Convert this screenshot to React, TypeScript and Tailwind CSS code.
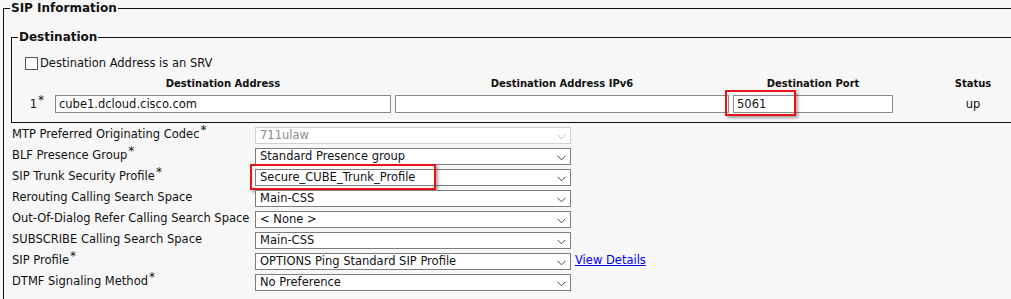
import React from "react";

const font = { fontFamily: '"DejaVu Sans", Verdana, sans-serif' };

const Chevron = ({ light }: { light?: boolean }) => (
  <svg width="9" height="6" viewBox="0 0 9 6" className="mt-[3px] shrink-0">
    <path d="M0.5 0.8 L4.5 4.8 L8.5 0.8" fill="none" stroke={light ? "#b8b8b8" : "#444"} strokeWidth="1" />
  </svg>
);

const Select = ({ value, disabled }: { value: string; disabled?: boolean }) => (
  <div
    className={
      "flex h-[17px] w-[316px] items-center justify-between bg-white pl-[4px] pr-[4px] " +
      (disabled ? "border border-[#cfcfcf] text-[#8a8a8a]" : "border border-[#7d7d7d] text-[#111]")
    }
  >
    <span className="leading-[15px]">{value}</span>
    <Chevron light={disabled} />
  </div>
);

const RedBox = ({ className }: { className: string }) => (
  <div
    className={
      "pointer-events-none absolute border-2 border-[#e8121b] shadow-[2px_2px_3px_rgba(0,0,0,0.35)] " + className
    }
  />
);

const Star = () => <span className="relative top-[-4px] ml-[1px] text-[12px]">*</span>;

type Row = { label: string; req?: boolean; value: string; disabled?: boolean; boxed?: boolean; link?: boolean };

const rows: Row[] = [
  { label: "MTP Preferred Originating Codec", req: true, value: "711ulaw", disabled: true },
  { label: "BLF Presence Group", req: true, value: "Standard Presence group" },
  { label: "SIP Trunk Security Profile", req: true, value: "Secure_CUBE_Trunk_Profile", boxed: true },
  { label: "Rerouting Calling Search Space", value: "Main-CSS" },
  { label: "Out-Of-Dialog Refer Calling Search Space", value: "< None >" },
  { label: "SUBSCRIBE Calling Search Space", value: "Main-CSS" },
  { label: "SIP Profile", req: true, value: "OPTIONS Ping Standard SIP Profile", link: true },
  { label: "DTMF Signaling Method", req: true, value: "No Preference" },
];

export default function App() {
  return (
    <div className="h-[299px] w-[1011px] overflow-hidden bg-[#f7f7f7] pt-[1px] text-[11.5px] text-[#111]" style={font}>
      <fieldset className="ml-[3px] w-[1040px] border border-[#111] pb-[20px] pl-[7px]">
        <legend className="-ml-[1px] px-[1px] text-[12px] font-bold leading-[14px]">SIP Information</legend>

        <fieldset className="mt-[15px] border border-[#111] pb-[9px] pl-[7px]">
          <legend className="-ml-[1px] px-[1px] text-[12px] font-bold leading-[14px]">Destination</legend>

          <div className="ml-[6px] mt-[12px] flex h-[14px] items-center">
            <span className="mr-[2px] h-[13px] w-[13px] border border-[#555] bg-white" />
            <span className="leading-[14px]">Destination Address is an SRV</span>
          </div>

          <div className="mt-[7px] grid grid-cols-[36px_336px_338px_164px_160px] text-[10px] font-bold leading-[14px]">
            <div />
            <div className="text-center">Destination Address</div>
            <div className="pl-[4px] text-center">Destination Address IPv6</div>
            <div className="pl-[4px] text-center">Destination Port</div>
            <div className="text-center">Status</div>
          </div>

          <div className="mt-[4px] grid h-[18px] grid-cols-[36px_336px_338px_164px_160px] items-center">
            <div className="pr-[11px] text-right">
              1<Star />
            </div>
            <div className="flex h-[18px] items-center border border-[#8a8a8a] bg-white pl-[3px]">cube1.dcloud.cisco.com</div>
            <div className="ml-[4px] h-[18px] border border-[#8a8a8a] bg-white" />
            <div className="relative ml-[4px] flex h-[18px] items-center border border-[#8a8a8a] bg-white pl-[3px]">
              5061
              <RedBox className="left-[-9px] top-[-6px] h-[26px] w-[71px]" />
            </div>
            <div className="text-center">up</div>
          </div>
        </fieldset>

        <div className="mt-[4px]">
          {rows.map((r) => (
            <div key={r.label} className="flex h-[21px] items-start">
              <div className="w-[244px] pl-[1px] leading-[14px]">
                {r.label}
                {r.req && <Star />}
              </div>
              <div className="relative">
                <Select value={r.value} disabled={r.disabled} />
                {r.boxed && <RedBox className="left-[-5px] top-[-5px] h-[26px] w-[186px]" />}
              </div>
              {r.link && (
                <a className="ml-[4px] leading-[15px] text-[#0000ee] underline" href="#">
                  View Details
                </a>
              )}
            </div>
          ))}
        </div>
      </fieldset>
    </div>
  );
}
